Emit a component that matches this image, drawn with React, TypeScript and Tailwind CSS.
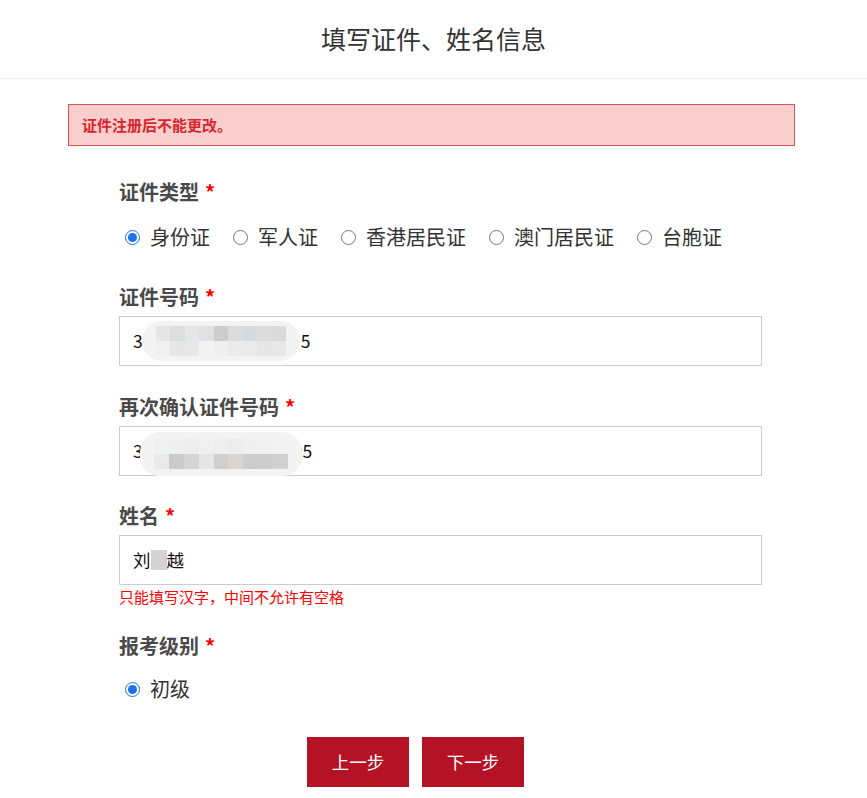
import React from 'react';

const font = { fontFamily: '"Noto Sans CJK SC", "Noto Sans", sans-serif' };

// Pixelated mosaic covering the private part of a value
function Mosaic({ rows, className }: { rows: string[][]; className: string }) {
  return (
    <div className={`absolute rounded-[20px] bg-[#f3f3f3] overflow-hidden flex flex-col justify-center px-[14px] ${className}`}>
      {rows.map((row, i) => (
        <div key={i} className="flex">
          {row.map((c, j) => (
            <span key={j} className="w-[15px] h-[15px]" style={{ background: c }} />
          ))}
        </div>
      ))}
    </div>
  );
}

function Label({ children, className = '' }: { children: React.ReactNode; className?: string }) {
  return (
    <div className={`h-[30px] leading-[30px] text-[20px] font-bold text-[#4a4a4a] ${className}`}>
      {children}
      <span className="ml-[6px] text-[#f00]">*</span>
    </div>
  );
}

function Radio({ checked, label }: { checked?: boolean; label: string }) {
  return (
    <label className="flex items-center mr-[23px]">
      {checked ? (
        <span className="w-[15px] h-[15px] rounded-full border-[1.5px] border-[#1a73e8] flex items-center justify-center">
          <span className="w-[9px] h-[9px] rounded-full bg-[#1a73e8]" />
        </span>
      ) : (
        <span className="w-[15px] h-[15px] rounded-full border border-[#767676] bg-white" />
      )}
      <span className="ml-[10px] text-[20px] text-[#333]">{label}</span>
    </label>
  );
}

function Field({ children }: { children: React.ReactNode }) {
  return (
    <div className="relative mt-[4px] h-[50px] w-[643px] border border-[#ccc] bg-white flex items-center pl-[13px] text-[17.5px] text-[#111]">
      {children}
    </div>
  );
}

export default function App() {
  return (
    <div className="min-h-[798px] bg-white" style={font}>
      <div className="h-[79px] border-b border-[#ececec] flex items-center justify-center">
        <h1 className="text-[25px] text-[#333] font-normal">填写证件、姓名信息</h1>
      </div>

      <div className="ml-[68px] mt-[25px] w-[727px] h-[42px] border border-[#e0524c] bg-[#f9cecc] flex items-center pl-[13px]">
        <span className="text-[15px] font-bold text-[#d8262c]">证件注册后不能更改。</span>
      </div>

      <div className="ml-[119px]">
        <Label className="mt-[31px]">证件类型</Label>
        <div className="mt-[15px] h-[30px] flex items-center pl-[6px]">
          <Radio checked label="身份证" />
          <Radio label="军人证" />
          <Radio label="香港居民证" />
          <Radio label="澳门居民证" />
          <Radio label="台胞证" />
        </div>

        <Label className="mt-[30px]">证件号码</Label>
        <Field>
          <span>3</span>
          <span className="ml-[158px]">5</span>
          <Mosaic
            className="left-[22px] top-[4px] w-[158px] h-[40px]"
            rows={[
              ['#e6e6e6', '#dcdddf', '#e6e6e6', '#e0e1e2', '#cdcdcd', '#dcdcdc', '#d8d9da', '#dcdcdc', '#dadada'],
              ['#f0f0f0', '#e6e6e6', '#e8e8e8', '#f3f3f3', '#efefef', '#ebebeb', '#eaeaea', '#e6e6e6', '#e8e8e8'],
            ]}
          />
        </Field>

        <Label className="mt-[26px]">再次确认证件号码</Label>
        <Field>
          <span>3</span>
          <span className="ml-[150px]">05</span>
          <Mosaic
            className="left-[20px] top-[5px] w-[162px] h-[44px]"
            rows={[
              ['#f0f0f0', '#eeeff1', '#ededed', '#f0f0f0', '#eeeeee', '#ececec', '#efefef', '#f0f0f0', '#f2f2f2'],
              ['#eaeaea', '#cbcbcb', '#d6d4d2', '#e5e6e8', '#cfcfcf', '#d8d6d4', '#cccccc', '#cdcdcd', '#d0d0d0'],
            ]}
          />
        </Field>

        <Label className="mt-[25px]">姓名</Label>
        <Field>
          <span>刘</span>
          <span className="inline-block w-[16px] h-[20px] bg-[#d3d3d3]" />
          <span>越</span>
        </Field>
        <div className="mt-[2px] h-[20px] leading-[20px] text-[15px] text-[#f00]">只能填写汉字，中间不允许有空格</div>

        <Label className="mt-[24px]">报考级别</Label>
        <div className="mt-[13px] h-[30px] flex items-center pl-[6px]">
          <Radio checked label="初级" />
        </div>
      </div>

      <div className="mt-[33px] ml-[307px] flex gap-[13px]">
        <button className="w-[102px] h-[50px] bg-[#b31324] text-white text-[17.5px]">上一步</button>
        <button className="w-[102px] h-[50px] bg-[#b31324] text-white text-[17.5px]">下一步</button>
      </div>
    </div>
  );
}
